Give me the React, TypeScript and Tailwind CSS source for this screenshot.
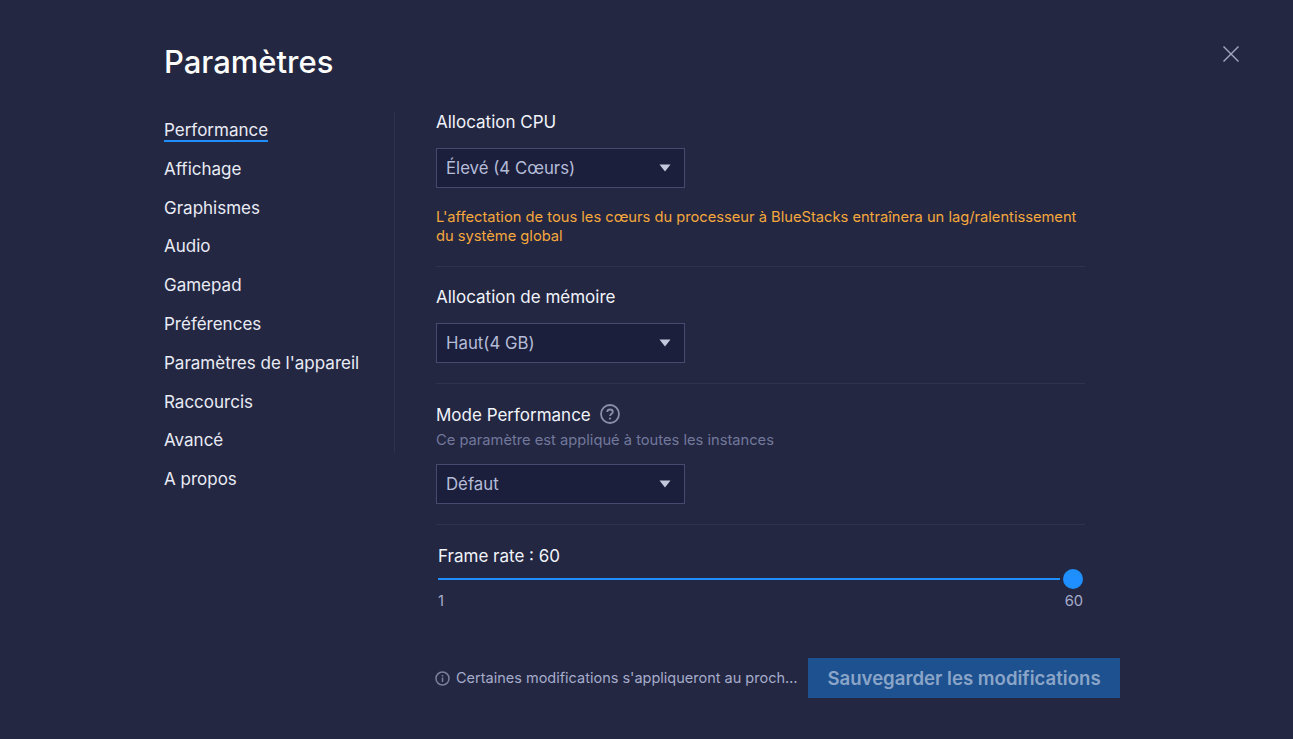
const navItems = [
  "Performance",
  "Affichage",
  "Graphismes",
  "Audio",
  "Gamepad",
  "Préférences",
  "Paramètres de l'appareil",
  "Raccourcis",
  "Avancé",
  "A propos",
];

const Caret = () => (
  <svg width="12" height="8" viewBox="0 0 12 8" className="text-[#c3c8dc]">
    <path d="M0.5 0.5H11.5L6 7.5Z" fill="currentColor" />
  </svg>
);

const Select = ({ value }: { value: string }) => (
  <div className="flex h-10 w-[249px] items-center justify-between border border-[#464a6e] bg-[#1c1f3c] pl-[9px] pr-[13px] text-[16.8px] text-[#b4bcd8]">
    <span className="pt-[2px]">{value}</span>
    <Caret />
  </div>
);

const Divider = () => <div className="h-px w-full bg-[#2f3350]" />;

const App = () => {
  return (
    <div className="relative flex h-[739px] w-full flex-col overflow-hidden bg-[#232742] pl-[164px] font-['Inter','Noto_Sans',sans-serif] text-white">
      <button className="absolute right-[53px] top-[45px] text-[#a5a9c0]">
        <svg width="18" height="18" viewBox="0 0 18 18" fill="none" stroke="currentColor" strokeWidth="1.4">
          <path d="M1.5 1.5L16.5 16.5M16.5 1.5L1.5 16.5" />
        </svg>
      </button>

      <h1 className="mt-[43px] h-[38px] text-[31px] leading-[38px] font-medium">Paramètres</h1>

      <div className="mt-[31px] flex">
        <nav className="h-[340px] w-[231px] border-r border-[#2f3350] pt-[6px]">
          <ul className="flex flex-col gap-[14.8px]">
            {navItems.map((item, i) => (
              <li key={item} className="h-6 text-[17px] leading-6 text-[#e9ebf5]">
                <span className={i === 0 ? "inline-block border-b-2 border-[#1f8fff] leading-[19px]" : ""}>
                  {item}
                </span>
              </li>
            ))}
          </ul>
        </nav>

        <main className="ml-[41px] flex w-[649px] flex-col">
          <h2 className="h-5 text-[17px] leading-5 text-[#f1f3fa]">Allocation CPU</h2>
          <div className="mt-4">
            <Select value="Élevé (4 Cœurs)" />
          </div>
          <p className="mt-[20px] text-[14.7px] leading-[19px] whitespace-nowrap text-[#f5a83c]">
            L'affectation de tous les cœurs du processeur à BlueStacks entraînera un lag/ralentissement
            <br />
            du système global
          </p>
          <div className="mt-[20px]">
            <Divider />
          </div>

          <h2 className="mt-[20px] h-5 text-[17px] leading-5 text-[#f1f3fa]">Allocation de mémoire</h2>
          <div className="mt-4">
            <Select value="Haut(4 GB)" />
          </div>
          <div className="mt-5">
            <Divider />
          </div>

          <div className="mt-5 flex h-5 items-center gap-[9px]">
            <h2 className="h-5 text-[17px] leading-[22px] text-[#f1f3fa]">Mode Performance</h2>
            <svg width="20" height="20" viewBox="0 0 20 20" fill="none" className="text-[#8b8fa9]">
              <circle cx="10" cy="10" r="9" stroke="currentColor" strokeWidth="1.8" />
              <path
                d="M7.2 8C7.3 6.4 8.5 5.5 10 5.5C11.6 5.5 12.8 6.5 12.8 7.9C12.8 9.7 10.1 9.9 10.1 12"
                stroke="currentColor"
                strokeWidth="1.8"
              />
              <circle cx="10" cy="14.6" r="1.1" fill="currentColor" />
            </svg>
          </div>
          <p className="mt-[6px] h-5 text-[14.7px] leading-5 text-[#72789b]">
            Ce paramètre est appliqué à toutes les instances
          </p>
          <div className="mt-[14px]">
            <Select value="Défaut" />
          </div>
          <div className="mt-5">
            <Divider />
          </div>

          <div className="mt-[21px] flex flex-col pl-[2px] pr-[2px]">
            <span className="h-5 text-[17px] leading-5 text-[#f1f3fa]">Frame rate : 60</span>
            <div className="relative mt-[12px] h-[2px] w-[622px] bg-[#1f8fff]">
              <div className="absolute left-[625px] top-[-9px] h-5 w-5 rounded-full bg-[#1f8fff]" />
            </div>
            <div className="mt-[12px] flex w-[645px] justify-between text-[14.7px] leading-[18px] text-[#a6accb]">
              <span>1</span>
              <span>60</span>
            </div>
          </div>

          <div className="mt-[48px] flex w-[684px] shrink-0 items-center">
            <svg width="15" height="15" viewBox="0 0 15 15" fill="none" className="-ml-px shrink-0 text-[#7b7f9b]">
              <circle cx="7.5" cy="7.5" r="6.5" stroke="currentColor" strokeWidth="1.5" />
              <path d="M7.5 6.5V11M7.5 4V5.5" stroke="currentColor" strokeWidth="1.5" />
            </svg>
            <span className="ml-[6px] w-[341px] shrink-0 whitespace-nowrap text-[14.5px] text-[#a6accb]">
              Certaines modifications s'appliqueront au proch…
            </span>
            <button className="ml-[11px] flex h-10 w-[312px] shrink-0 items-center justify-center bg-[#1e518f] pt-[2px] text-[18.6px] font-semibold text-[#8ba5c8]">
              Sauvegarder les modifications
            </button>
          </div>
        </main>
      </div>
    </div>
  );
};

export default App;
